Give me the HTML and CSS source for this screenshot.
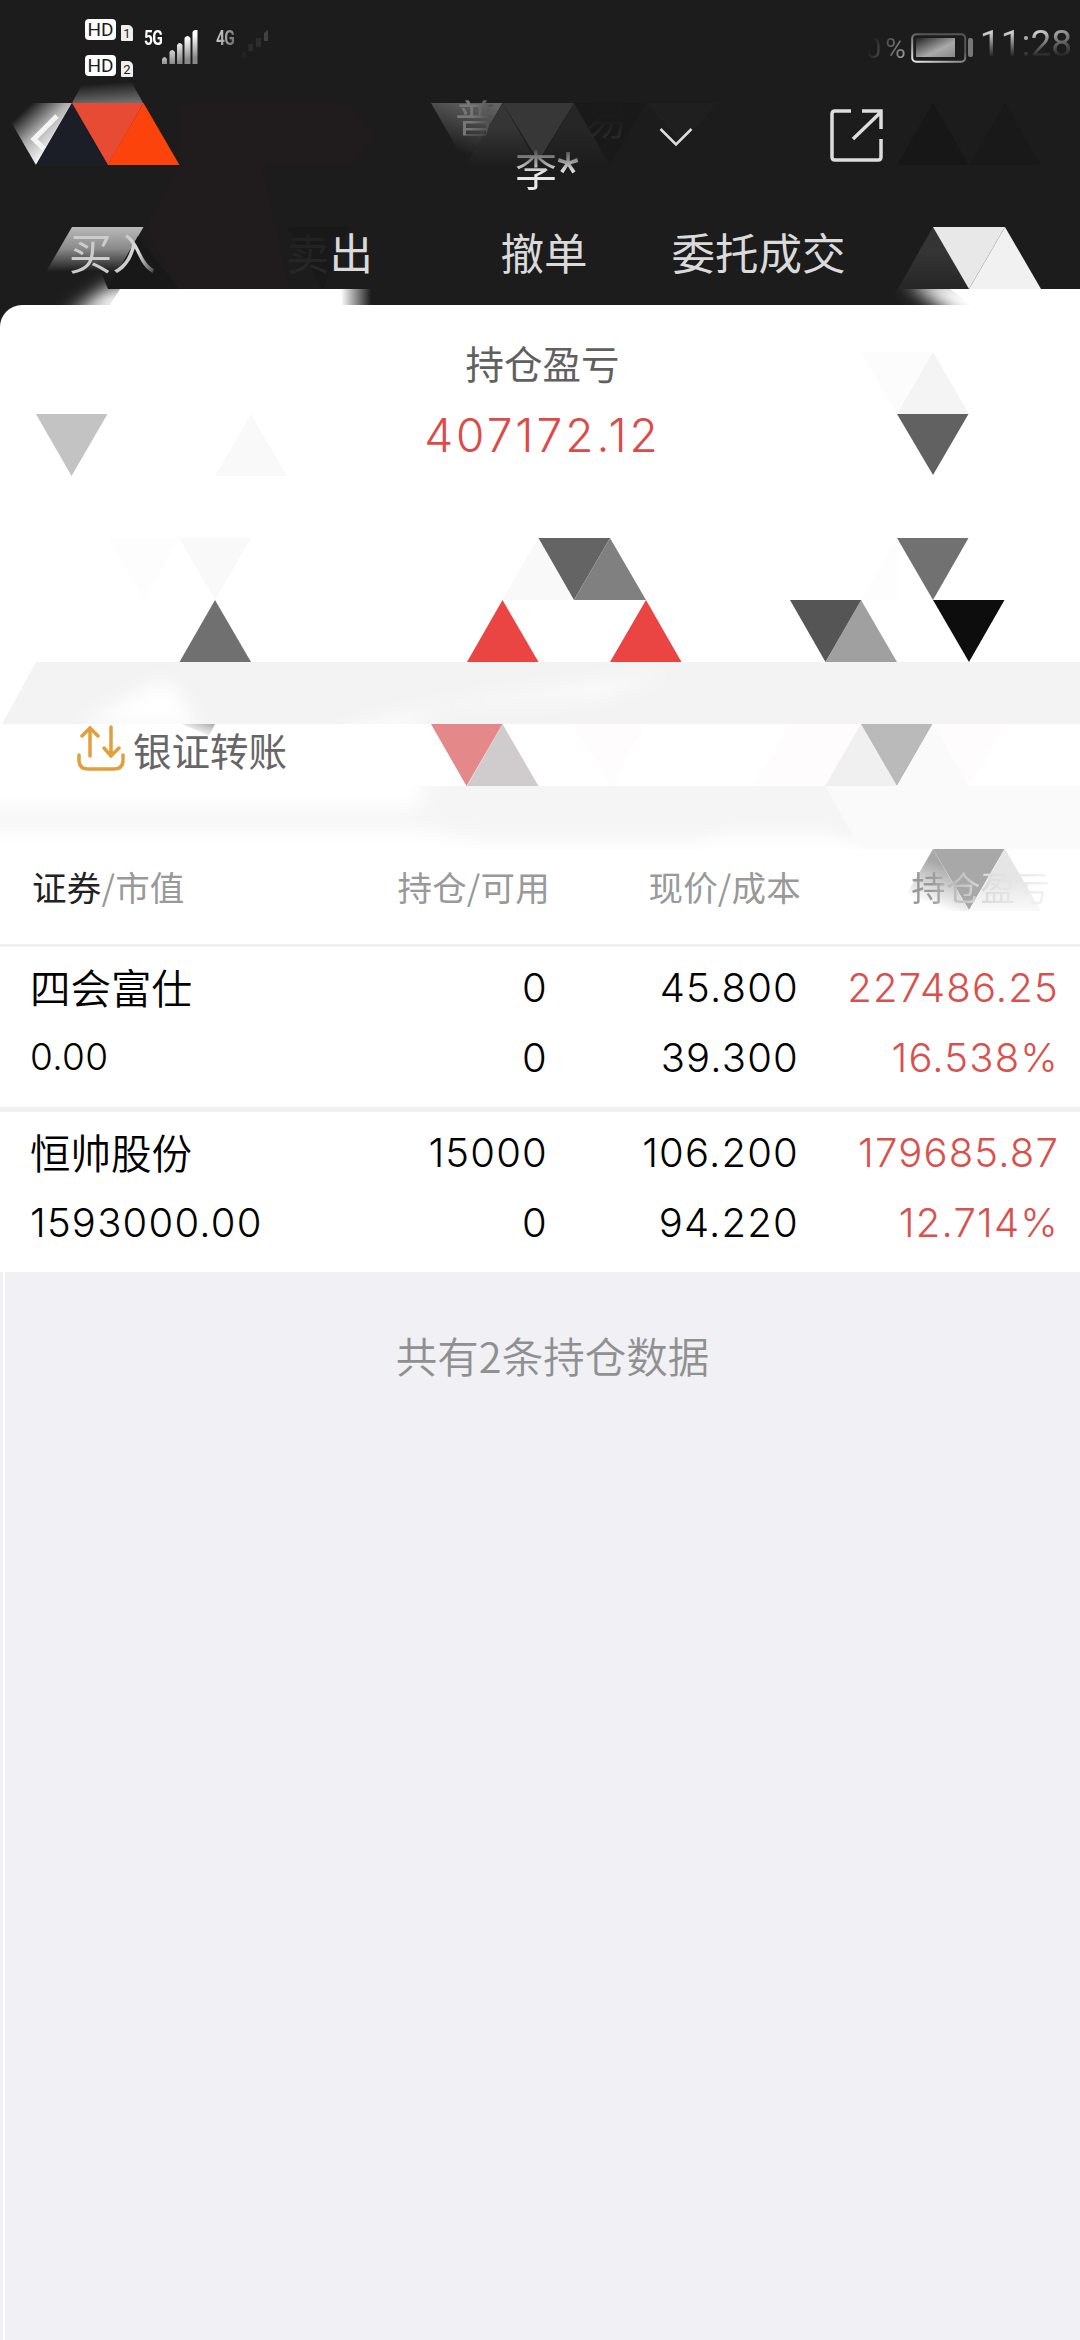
FILE: index.html
```
<!DOCTYPE html>
<html lang="zh-CN">
  <head>
    <meta charset="UTF-8" />
    <meta name="viewport" content="width=device-width, initial-scale=1.0" />
    <title>持仓</title>
    <link rel="stylesheet" href="styles.css" />
  </head>
  <body>
    <div class="page">
      <svg class="mosaic" viewBox="0 0 1080 1300" aria-hidden="true">
        <defs>
          <linearGradient id="back" x1="0.25" y1="0.1" x2="0.8" y2="0.6">
            <stop offset="0.1" stop-color="#1c1c1c" />
            <stop offset="0.6" stop-color="#b0b0b0" />
            <stop offset="1" stop-color="#eee" />
          </linearGradient>
          <linearGradient id="cap" x1="0.3" y1="0" x2="0.5" y2="1">
            <stop offset="0.2" stop-color="#1c1c1c" />
            <stop offset="1" stop-color="#6c6c6c" />
          </linearGradient>
          <linearGradient id="title" x1="0.7" y1="0" x2="0.4" y2="0.8">
            <stop offset="0" stop-color="#626262" />
            <stop offset="1" stop-color="#1c1c1c" />
          </linearGradient>
          <linearGradient id="slate" x1="0" y1="0" x2="0" y2="1">
            <stop offset="0.4" stop-color="#353535" />
            <stop offset="1" stop-color="#1d1d1d" />
          </linearGradient>
          <linearGradient id="tab" x1="0" y1="0" x2="0" y2="1">
            <stop offset="0" stop-color="#b9b9b9" />
            <stop offset="0.35" stop-color="#8a8a8a" />
            <stop offset="0.72" stop-color="#1c1c1c" />
          </linearGradient>
          <linearGradient id="fade" x1="0" y1="0" x2="1" y2="0">
            <stop offset="0" stop-color="#fff" />
            <stop offset="1" stop-color="#1c1c1c" />
          </linearGradient>
          <linearGradient id="pl" x1="1" y1="0" x2="0.55" y2="1">
            <stop offset="0.35" stop-color="#a8a8a8" />
            <stop offset="0.95" stop-color="#fff" />
          </linearGradient>
          <linearGradient id="pr" x1="0" y1="0" x2="0" y2="1">
            <stop offset="0.5" stop-color="#e5e5e5" />
            <stop offset="1" stop-color="#fafafa" />
          </linearGradient>
          <linearGradient id="nick" x1="0" y1="1" x2="1" y2="0">
            <stop offset="0.3" stop-color="#fff" />
            <stop offset="1" stop-color="#aaa" />
          </linearGradient>
          <filter id="soft" x="-20%" y="-100%" width="140%" height="300%"><feGaussianBlur stdDeviation="9" /></filter>
          <clipPath id="strip"><path d="M0 272h101l7 17h972v16H0z" /></clipPath>
          <clipPath id="band"><path d="M36 662H1080V724H2z" /></clipPath>
          <clipPath id="lower"><rect x="0" y="786" width="1080" height="63" /></clipPath>
        </defs>

        <!-- header -->
        <path fill="#201b1c" d="M179 103h170l28 36-28 26h-87l28 124H179l-34-62 34-62z" />
        <path fill="url(#cap)" d="M85 79h45l13 24H72z" />
        <path fill="url(#back)" d="M0 103h72L36 165z" />
        <path fill="#1b1e27" d="M72 103l35 62H36z" />
        <path fill="#e84b33" d="M72 103h71.500l-35.500 62z" />
        <path fill="#fb430b" d="M143.500 103l36 62h-72z" />
        <path fill="url(#title)" d="M431 103h71.500l-36 62z" />
        <path fill="url(#slate)" d="M502.500 103l36 62h-72z" />
        <path fill="#373737" d="M502.500 103H574l-35.500 58z" />
        <path fill="url(#slate)" opacity="0.400" d="M574 103l36 62h-72z" />
        <path fill="#191919" d="M574 103h72l-36 62z" />
        <path fill="#1f1f1f" d="M646 103h72l-36 40z" />
        <path fill="#171717" d="M933 103l36 62h-72z" />
        <path fill="#191919" d="M1005 103l36 62h-72z" />
        <path fill="url(#tab)" d="M72 227h71.500l-36 62H36z" />
        <path fill="#181818" d="M138 236l41 53h-71z" />
        <path fill="#191919" d="M287 227h62l-26 62z" />
        <g clip-path="url(#strip)">
          <path fill="#fff" filter="url(#soft)" d="M66 318l44-32h60v32z" />
          <path fill="#fff" d="M120 289h222v16H110z" />
          <path fill="url(#fade)" d="M341 289h30v16h-30z" />
          <path fill="#fff" filter="url(#soft)" d="M905 280h200v50H975z" />
          <path fill="#fff" d="M950 289h130v16H972z" />
        </g>
        <path fill="#343434" d="M933 227l36 62h-71z" />
        <path fill="url(#slate)" opacity="0.600" d="M933 227l36 62h-71z" />
        <path fill="#e8e8e8" d="M933 227h72l-36 62z" />
        <path fill="#f1f1f1" d="M1005 227l36 62h-72z" />

        <!-- profit card -->
        <path fill="#c3c3c3" d="M36 414h71.500l-36 62z" />
        <path fill="#f9f9f9" d="M251 414l36 62h-72zM179 538h72l-36 62zM538 538l36 62h-72z" />
        <path fill="#fdfdfd" d="M108 538h71l-35 62zM897 538v62h-36z" />
        <path fill="#fcfcfc" d="M861 352h72l-36 62z" />
        <path fill="#f4f4f4" d="M933 352l36 62h-72z" />
        <path fill="#616161" d="M897 414h71.500l-35.500 61z" />
        <path fill="#646464" d="M538.500 538H610l-36 62z" />
        <path fill="#808080" d="M610 538l36 62h-72z" />
        <path fill="#717171" d="M897 538h71.500L933 600z" />
        <path fill="#707070" d="M215 600l36 62h-71.500z" />
        <path fill="#eb4543" d="M502.500 600l36 62H467zM646 600l35.500 62H610z" />
        <path fill="#555" d="M790 600h71.500l-36 62z" />
        <path fill="#a0a0a0" d="M861 600l36 62h-71.500z" />
        <path fill="#0d0d0d" d="M933 600h71.500L969 662z" />

        <!-- transfer strip -->
        <g clip-path="url(#band)">
          <path fill="#f3f3f3" d="M0 662h1080v62H0z" />
          <path fill="#fff" filter="url(#soft)" d="M80 724l70-38 20-4 30 46zM330 732l130-30 140-18 70-12-70 24-150 10-60 26z" />
        </g>
        <path fill="#fefcfd" d="M574 724h71l-35 62zM790 724h72l-36 62h-72zM933 724h72l-36 62z" />
        <path fill="url(#nick)" d="M182 724h33l-6 12z" />
        <path fill="#e58889" d="M431 724h71.500l-36 62z" />
        <path fill="#d0cccd" d="M502.500 724l36 62H467z" />
        <path fill="#f0f0f0" d="M861 724l36 62h-72z" />
        <path fill="#bababa" d="M861 724h71.500L897 786z" />
        <path fill="#fafafa" d="M933 724l36 62h-72z" />
        <g clip-path="url(#lower)">
          <path fill="#f5f5f5" filter="url(#soft)" d="M-20 809h440l10-50h700v82H480l-60-12H-20z" />
          <path fill="#fff" filter="url(#soft)" d="M700 846l30-10h100l20 20H700z" />
          <path fill="#fafafa" d="M825 786h255v63H861z" />
        </g>
        <path fill="url(#pl)" d="M933 849l36 62h-72z" />
        <path fill="#a8a8a8" d="M933 849h71.500l-35.500 61z" />
        <path fill="url(#pr)" d="M1005 849l36 62h-72z" />
      </svg>

      <header class="header">
        <div class="status">
          <div class="hd-group">
            <div class="hd-row"><span class="hd">HD</span><span class="sim">1</span></div>
            <div class="hd-row"><span class="hd">HD</span><span class="sim">2</span></div>
          </div>
          <span class="net">5G</span>
          <svg class="bars" viewBox="0 0 36 34">
            <linearGradient id="bar" x1="0" y1="0" x2="0.300" y2="1">
              <stop offset="0.400" stop-color="#fff" />
              <stop offset="1" stop-color="#888" />
            </linearGradient>
            <path fill="url(#bar)" d="M0 29q2.500-4 5 0v5H0zM7.500 22q2.500-4 5.500 0v12H7.500zM15 15q2.500-4 5.500 0v19H15zM22.500 8q3-4 6 0v26h-6zM30.500 2q2-3 5-2v34h-5z" />
          </svg>
          <span class="net net-dim">4G</span>
          <svg class="bars" viewBox="0 0 36 34">
            <path fill="#2c2c2c" d="M7.500 14h4.500v7H7.500zM15 8h5v9h-5z" />
            <path fill="#222" d="M1 22h4v6H1z" />
            <path fill="#404040" d="M23 3l4-3v11h-4z" />
          </svg>
          <div class="status-right">
            <span class="percent">0%</span>
            <svg class="battery" viewBox="0 0 63 30">
              <defs>
                <linearGradient id="rim" x1="0.800" y1="0" x2="0" y2="1">
                  <stop offset="0.300" stop-color="#555" />
                  <stop offset="1" stop-color="#eee" />
                </linearGradient>
                <linearGradient id="charge" x1="0" y1="0" x2="1" y2="1">
                  <stop offset="0" stop-color="#222" />
                  <stop offset="0.600" stop-color="#aaa" />
                  <stop offset="1" stop-color="#888" />
                </linearGradient>
              </defs>
              <rect x="1.200" y="1.200" width="53" height="27.500" rx="4" fill="none" stroke="url(#rim)" stroke-width="2" />
              <path fill="url(#charge)" d="M5 5h39v19H5z" />
              <rect x="57" y="5" width="5" height="19" rx="2" fill="#777" />
            </svg>
            <span class="time">11:28</span>
          </div>
        </div>

        <div class="nav">
          <svg class="back" viewBox="0 0 32 42"><path d="M27 5L4 28l10 10" fill="none" stroke="#f4f4f4" stroke-width="5" /></svg>
          <div class="account">
            <div class="account-type"><span class="pu">普</span><span class="yi">易</span></div>
            <div class="account-name">李<i>*</i></div>
          </div>
          <svg class="chevron" viewBox="0 0 34 20"><path d="M1.500 2L17 17.500 32.500 2" fill="none" stroke="#ddd" stroke-width="2.500" /></svg>
          <svg class="share" viewBox="0 0 54 54">
            <path d="M21 2H5Q2 2 2 5v43q0 3 3 3h43q3 0 3-3V30M32 2h19v18M51 3L23 30" fill="none" stroke="#ddd" stroke-width="3.500" />
          </svg>
        </div>

        <nav class="tabs">
          <span class="tab-buy">买入</span>
          <span><span class="mai">卖</span>出</span>
          <span>撤单</span>
          <span>委托成交</span>
          <span></span>
        </nav>
      </header>

      <section class="card">
        <div class="card-label">持仓盈亏</div>
        <div class="card-value">407172.12</div>
        <div class="transfer">
          <svg class="transfer-icon" viewBox="0 0 48 48">
            <path d="M2 30v5q0 9 9 9h26q9 0 9-9v-5M13 31V3M5 11l8-8 8 8M34 2v29M27 23l7 8 8-8" fill="none" stroke="#e2a03c" stroke-width="3.500" stroke-linecap="round" />
          </svg>
          <span>银证转账</span>
        </div>
      </section>

      <section class="holdings">
        <div class="row head">
          <span><b>证券</b>/市值</span>
          <span>持仓/可用</span>
          <span>现价/成本</span>
          <span class="head-profit">持仓盈亏</span>
        </div>
        <div class="row">
          <div><p class="name">四会富仕</p><p class="small">0.00</p></div>
          <div><p>0</p><p>0</p></div>
          <div><p>45.800</p><p>39.300</p></div>
          <div class="up"><p>227486.25</p><p>16.538%</p></div>
        </div>
        <div class="row">
          <div><p class="name">恒帅股份</p><p>1593000.00</p></div>
          <div><p>15000</p><p>0</p></div>
          <div><p>106.200</p><p>94.220</p></div>
          <div class="up"><p>179685.87</p><p>12.714%</p></div>
        </div>
      </section>

      <footer class="summary">共有2条持仓数据</footer>
    </div>
  </body>
</html>
```
FILE: styles.css
```
* {
  box-sizing: border-box;
}
body {
  margin: 0;
  background: #f0f0f5;
  font-family: "Noto Sans CJK SC", sans-serif;
}
p {
  margin: 0;
}
svg {
  display: block;
}

.page {
  position: relative;
  width: 1080px;
  height: 2340px;
  display: flex;
  flex-direction: column;
  overflow: hidden;
}
.mosaic {
  position: absolute;
  top: 0;
  left: 0;
  width: 1080px;
  height: 1300px;
  z-index: 1;
}

/* header */
.header {
  height: 327px;
  background: #1c1c1c;
  color: #dadada;
}
.status,
.nav,
.tabs,
.card > *,
.head {
  position: relative;
  z-index: 2;
}
.status {
  display: flex;
  height: 82px;
  padding: 19px 8px 0 85px;
}
.hd-group {
  width: 59px;
}
.hd-row {
  display: flex;
  gap: 5px;
  height: 36px;
}
.hd {
  width: 31px;
  height: 21px;
  border-radius: 4px;
  background: #fff;
  color: #1c1c1c;
  font: 19px/21px Roboto, sans-serif;
  text-align: center;
}
.sim {
  width: 12px;
  height: 16px;
  margin-top: 6px;
  border-radius: 1px 5px 1px 1px;
  background: #eee;
  color: #1c1c1c;
  font: 13px/17px Roboto, sans-serif;
  text-align: center;
}
.net {
  width: 18px;
  height: 22px;
  margin-top: 8px;
  color: #fff;
  font: bold 21px/22px Roboto, sans-serif;
  letter-spacing: -1px;
  transform: scaleX(0.74);
  transform-origin: left;
}
.net-dim {
  width: 25px;
  margin-left: 18px;
  color: transparent;
  background: linear-gradient(110deg, #ddd, #666);
  background-clip: text;
}
.bars {
  width: 36px;
  height: 34px;
  margin-top: 11px;
}
.status-right {
  display: flex;
  margin-left: auto;
}
.percent,
.time {
  color: transparent;
  background-clip: text;
  font-family: Roboto, sans-serif;
}
.percent {
  height: 30px;
  margin: 15px 1px 0 0;
  font-size: 28px;
  line-height: 30px;
  letter-spacing: 4px;
  background-image: linear-gradient(110deg, #1c1c1c 15%, #999 85%);
}
.battery {
  width: 63px;
  height: 30px;
  margin-top: 14px;
}
.time {
  height: 44px;
  margin: 3px 0 0 6px;
  font-size: 37px;
  line-height: 44px;
  background-image: linear-gradient(100deg, rgba(28, 28, 28, 0) 60%, rgba(28, 28, 28, 0.5)),
    linear-gradient(#ccc 25%, #1c1c1c 80%);
}

.nav {
  display: flex;
  height: 132px;
}
.back {
  width: 32px;
  height: 42px;
  margin: 29px 0 0 30px;
  clip-path: polygon(0 0, 100% 0, 100% 20%, 45% 100%, 0 100%);
}
.account {
  width: 172px;
  margin: 13px 0 0 393px;
  font-size: 42px;
}
.account-type {
  display: flex;
  justify-content: space-between;
  height: 44px;
  line-height: 44px;
}
.account-type span,
.account-name,
.tab-buy,
.mai {
  color: transparent;
  background-clip: text;
}
.pu {
  background-image: linear-gradient(100deg, #777 40%, #444 90%);
  clip-path: polygon(0 12%, 100% 12%, 74% 92%, 0 92%);
}
.yi {
  background-image: linear-gradient(#1a1a1a 55%, #2a2a2a);
}
.account-name {
  display: flex;
  margin-left: 60px;
  line-height: 58px;
  background-image: linear-gradient(#555 20%, #e8e8e8 55%);
}
.account-name i {
  padding-top: 4px;
  font: 51px/58px Roboto, sans-serif;
}
.chevron {
  width: 34px;
  height: 20px;
  margin: 45px 0 0 32px;
}
.share {
  width: 54px;
  height: 54px;
  margin: 27px 0 0 137px;
}

.tabs {
  display: grid;
  grid-template-columns: repeat(5, 1fr);
  height: 74px;
  margin-left: 8px;
  line-height: 76px;
  text-align: center;
  font-size: 43.500px;
}
.tab-buy {
  padding-right: 6px;
  background-image: linear-gradient(100deg, #ccc 55%, #ddd 60%, #333 70%);
}
.mai {
  background-image: linear-gradient(#1c1c1c, #2a2a2a);
}

/* profit card */
.card {
  height: 544px;
  margin-top: -22px;
  background: #fff;
  border-top-left-radius: 22px;
  text-align: center;
}
.card-label {
  padding: 28px 0 0 5px;
  line-height: 58px;
  font-size: 38.500px;
  color: #606060;
}
.card-value {
  margin: 14px 0 0 5px;
  font: 300 46px/60px Inter, sans-serif;
  letter-spacing: 3px;
  color: #dd4a47;
}
.transfer {
  display: flex;
  gap: 8px;
  margin: 260px 0 0 77px;
  font-size: 38.500px;
  line-height: 48px;
  color: #666;
}
.transfer-icon {
  width: 48px;
  height: 48px;
}

/* holdings */
.holdings {
  background: #fff;
}
.row {
  display: grid;
  grid-template-columns: 264px 254px 251px 260px;
  height: 165px;
  padding: 6px 0 0 30px;
  border-bottom: 5px solid #f1f1f5;
  font: 300 40px/70px Inter, "Noto Sans CJK SC", sans-serif;
  letter-spacing: 1.200px;
  color: #000;
  text-align: right;
}
.row:last-child {
  height: 160px;
  border: 0;
}
.row > :first-child {
  text-align: left;
}
.row .name {
  height: 70px;
  font-family: "Noto Sans CJK SC", sans-serif;
  font-size: 40.500px;
  font-weight: 350;
  line-height: 67px;
  letter-spacing: 0;
}
.row .small {
  font-size: 37px;
  line-height: 68px;
  letter-spacing: 0.300px;
}
.row .up {
  color: #da504d;
}
.head {
  height: 98px;
  padding: 12px 0 0 32px;
  border-bottom: 3px solid #f1f1f4;
  font: 400 34.500px/50px "Noto Sans CJK SC", sans-serif;
  letter-spacing: 0.200px;
  color: #999;
}
.head b {
  font-weight: 400;
  color: #222;
}
.head-profit {
  margin-right: 11px;
  color: transparent;
  background: linear-gradient(92deg, #999 52%, #b5b5b5 58%, #ddd 75%, #f4f4f4);
  background-clip: text;
}

.summary {
  flex: 1;
  margin-left: 3px;
  padding: 53px 0 0 20px;
  border-left: 2px solid #fff;
  background: #f0f0f5;
  color: #909090;
  text-align: center;
  font-size: 41.500px;
  font-weight: 350;
  line-height: 60px;
}
```
